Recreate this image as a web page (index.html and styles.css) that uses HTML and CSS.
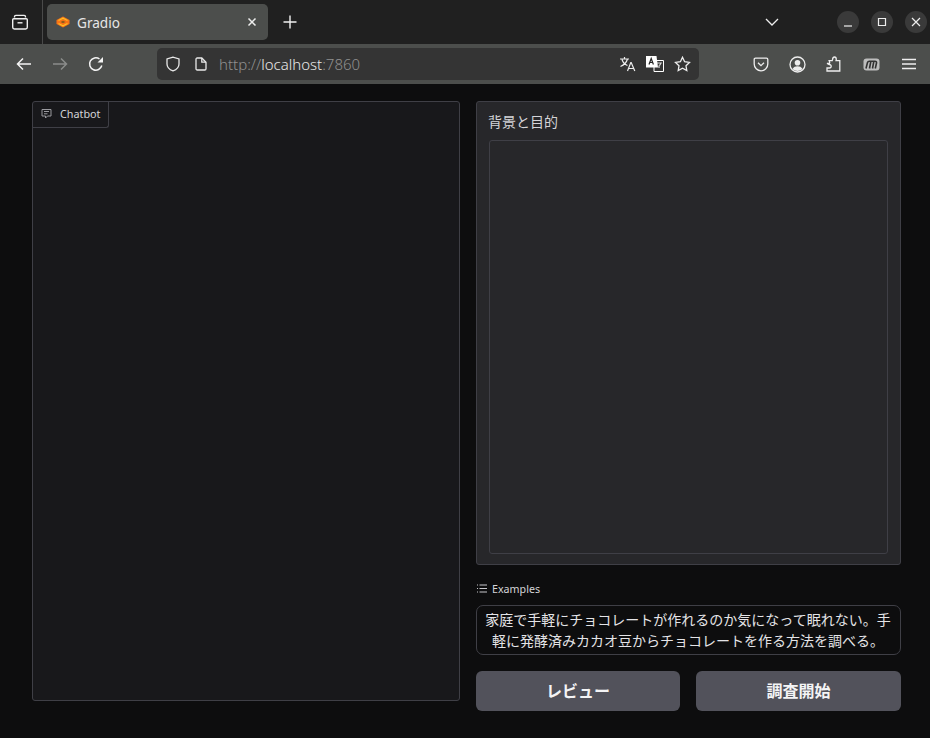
FILE: index.html
```html
<!DOCTYPE html>
<html lang="ja">
<head>
    <meta charset="UTF-8">
    <meta name="viewport" content="width=device-width, initial-scale=1.0">
    <title>Gradio</title>
    <link rel="stylesheet" href="styles.css">
</head>
<body>

<!-- Browser tab strip -->
<div class="tabbar">
    <div class="tab-side">
        <svg width="18" height="18" viewBox="0 0 18 18" fill="none" stroke="#f0f0f0" stroke-width="1.4"><path d="M3.500 4.500V3.700c0-.8.500-1.300 1.300-1.300h8.400c.8 0 1.300.5 1.300 1.300v.8"/><path d="M2.700 5.700h12.600c.6 0 1 .4 1 1v7.600c0 .9-.8 1.700-1.700 1.700H3.400c-.9 0-1.700-.8-1.700-1.700V6.700c0-.6.400-1 1-1z"/><path d="M6.500 9.800h5"/></svg>
    </div>
    <div class="tab">
        <svg class="tab-logo" width="14" height="12" viewBox="0 0 14 12" fill="none"><path d="M7 .5 13.500 4v4L7 11.500.5 8V4z" fill="#f97316"/><path d="M2.500 4.500 7 2.200l4.500 2.300M2.500 7.500 7 9.800l4.500-2.300" stroke="#fbbf24" stroke-width="1.200"/><path d="M4.500 6 7 4.800 9.500 6 7 7.200z" fill="#8a5a1c"/></svg>
        <span class="tab-title">Gradio</span>
        <svg width="10" height="10" viewBox="0 0 10 10" stroke="#eee" stroke-width="1.5"><path d="m1.500 1.500 7 7M8.500 1.500l-7 7"/></svg>
    </div>
    <svg class="new-tab" width="14" height="14" viewBox="0 0 14 14" stroke="#f0f0f0" stroke-width="1.4"><path d="M7 .5v13M.5 7h13"/></svg>
    <svg class="tab-list" width="14" height="8" viewBox="0 0 14 8" fill="none" stroke="#eee" stroke-width="1.3"><path d="m1 1 6 6 6-6"/></svg>
    <div class="win-buttons">
        <div class="win-btn"><svg width="10" height="10" viewBox="0 0 10 10" stroke="#eee" stroke-width="1.2"><path d="M1 9h8"/></svg></div>
        <div class="win-btn"><svg width="10" height="10" viewBox="0 0 10 10" fill="none" stroke="#eee" stroke-width="1.2"><path d="M1.500 1.500h7v7h-7z"/></svg></div>
        <div class="win-btn"><svg width="10" height="10" viewBox="0 0 10 10" stroke="#eee" stroke-width="1.2"><path d="m1 1 8 8M9 1 1 9"/></svg></div>
    </div>
</div>

<!-- Navigation toolbar -->
<div class="navbar">
    <div class="nav-left">
        <svg width="16" height="14" viewBox="0 0 16 14" fill="none" stroke="#f4f4f4" stroke-width="1.5"><path d="M15 7H1.500M7 1.500 1.500 7 7 12.500"/></svg>
        <svg width="16" height="14" viewBox="0 0 16 14" fill="none" stroke="#8a8c8a" stroke-width="1.5"><path d="M1 7h13.500M9 1.500 14.500 7 9 12.500"/></svg>
        <svg width="16" height="16" viewBox="0 0 16 16" fill="none" stroke="#f4f4f4" stroke-width="1.5"><path d="M13.800 9.500A6.200 6.200 0 1 1 11.500 3"/><path d="M15 1v5.500H9.500z" fill="#f4f4f4" stroke="none"/></svg>
    </div>
    <div class="urlbar">
        <svg width="16" height="16" viewBox="0 0 16 16" fill="none" stroke="#e8e8e8" stroke-width="1.3"><path d="M8 1.200 2 3v5c0 3.500 3 5.800 6 6.900 3-1.100 6-3.400 6-6.900V3z"/></svg>
        <svg class="url-page" width="12" height="14" viewBox="0 0 12 14" fill="none" stroke="#e8e8e8" stroke-width="1.300"><path d="M1 2.200C1 1.500 1.500 1 2.200 1h4.600L11 5.200v6.600c0 .7-.5 1.200-1.200 1.200H2.200C1.500 13 1 12.500 1 11.800z"/><path d="M6.800 1v4.200H11"/></svg>
        <span class="url-text"><span class="url-dim">http://</span>localhost<span class="url-dim">:7860</span></span>
        <div class="url-icons">
            <svg width="17" height="16" viewBox="0 0 17 16" fill="none" stroke="#eee" stroke-width="1.200"><path d="M1 3h9M5.500 1v2M8.500 3C7.500 6.500 5 9 1.500 10.500M3 3.500c1 3 3 5 5.500 6M8.500 15l3.300-8.500h.4L15.800 15M9.800 12.500h4.500"/></svg>
            <svg width="18" height="16" viewBox="0 0 18 16"><path d="M8 4.500h9.500v11H8z" fill="#343434" stroke="#fff"/><path d="M0 0h10.500l1.500 11.500H0z" fill="#fff"/><path d="m3 8.500 2.200-6 2.200 6M3.800 6.500h2.800" fill="none" stroke="#222" stroke-width="1.200"/><path d="M11 7h4l-1.500 2.500M13 9.500V12" fill="none" stroke="#ddd" stroke-width="1.200"/></svg>
            <svg width="17" height="16" viewBox="0 0 17 16" fill="none" stroke="#eee" stroke-width="1.300"><path d="m8.500 1.300 2.100 4.400 4.900.7-3.500 3.400.8 4.800-4.300-2.300-4.300 2.300.8-4.800L1.500 6.400l4.900-.7z"/></svg>
        </div>
    </div>
    <div class="nav-right">
        <svg width="16" height="15" viewBox="0 0 16 15" fill="none" stroke="#eee" stroke-width="1.300"><path d="M2.500 1.200h11c.8 0 1.300.5 1.300 1.300V7a6.800 6.800 0 0 1-13.600 0V2.500c0-.8.500-1.300 1.300-1.300z"/><path d="m5 5.700 3 3 3-3"/></svg>
        <svg width="17" height="17" viewBox="0 0 17 17" fill="none" stroke="#eee" stroke-width="1.300"><circle cx="8.500" cy="8.500" r="7.500"/><circle cx="8.500" cy="6.800" r="2.800" fill="#eee" stroke="none"/><path d="M3.500 13c1-2 3-2.700 5-2.700s4 .7 5 2.700c-1.300 1.300-3.200 2-5 2s-3.700-.7-5-2z" fill="#eee" stroke="none"/></svg>
        <svg width="15" height="16" viewBox="0 0 15 16" fill="none" stroke="#eee" stroke-width="1.300"><path d="M1 7.500h2.500c.4-1 .1-2-.3-2.800h3l.3-1C6.700 2 7.500 1 8.500 1s1.800 1 1.800 2.300l-.3 1.400h3.800V15H1v-3h2.300c1.200 0 1.900-.8 1.900-1.800S4.400 8.500 3.300 8.500z"/></svg>
        <svg class="nav-wide" width="17" height="13" viewBox="0 0 17 13"><rect x="0.500" y="0.500" width="16" height="12" rx="3" fill="#bdbdbd"/><path d="M3 10.500 4.500 4.500c.3-1 1-1.300 1.700-1.300h5.800c1.200 0 1.700.8 1.500 1.800L12.300 10.500M6.500 10.500 7.800 3.500M9.500 10.500 10.800 3.500" fill="none" stroke="#333" stroke-width="1.600"/></svg>
        <svg class="nav-wide" width="14" height="12" viewBox="0 0 14 12" stroke="#eee" stroke-width="1.300"><path d="M0 1.500h14M0 6h14M0 10.500h14"/></svg>
    </div>
</div>

<!-- Gradio app -->
<div class="app">
    <div class="chatbot">
        <div class="chatbot-label">
            <svg width="11" height="11" viewBox="0 0 11 11" fill="none" stroke="#9a9a9f" stroke-width="1"><path d="M1 1.500h9v6.500H6.500L4.500 10V8H1z"/><path d="M3 3.500h5M3 5.800h3.500"/></svg>
            <span>Chatbot</span>
        </div>
    </div>
    <div class="side">
        <div class="form-panel">
            <label class="form-label" for="purpose">背景と目的</label>
            <textarea class="form-input" id="purpose"></textarea>
        </div>
        <div class="examples-label">
            <svg width="10" height="9" viewBox="0 0 10 9" stroke="#c8c8cc" stroke-width="1"><path d="M0 1h1M2.500 1H10M0 4.500h1M2.500 4.500H10M0 8h1M2.500 8H10"/></svg>
            <span>Examples</span>
        </div>
        <div class="example">家庭で手軽にチョコレートが作れるのか気になって眠れない。手軽に発酵済みカカオ豆からチョコレートを作る方法を調べる。</div>
        <div class="buttons">
            <button class="btn btn-review">レビュー</button>
            <button class="btn">調査開始</button>
        </div>
    </div>
</div>

</body>
</html>
```
FILE: styles.css
```css
* {
    box-sizing: border-box;
}
html, body {
    height: 100%;
}
body {
    margin: 0;
    background: #0d0d0e;
    font-family: "Noto Sans", "Noto Sans CJK JP", sans-serif;
    overflow: hidden;
}
svg {
    display: block;
    flex: none;
}

/* tab strip */
.tabbar {
    display: flex;
    align-items: center;
    height: 44px;
    background: #202020;
}
.tab-side {
    display: flex;
    align-items: center;
    padding-left: 11px;
    width: 43px;
    height: 44px;
    border-right: 1px solid #4a4a4a;
}
.tab {
    display: flex;
    align-items: center;
    width: 221px;
    height: 36px;
    margin-left: 4px;
    padding: 0 11px 0 9px;
    background: #4c4e4c;
    border-radius: 5px;
}
.tab-title {
    flex: 1;
    margin-left: 7px;
    color: #e6e6e6;
    font-size: 13.6px;
}
.new-tab {
    margin-left: 15px;
}
.tab-list {
    margin-left: auto;
    margin-right: 58px;
}
.win-buttons {
    display: flex;
    gap: 12px;
    margin-right: 3px;
}
.win-btn {
    display: flex;
    align-items: center;
    justify-content: center;
    width: 22px;
    height: 22px;
    border-radius: 50%;
    background: #3a3a3a;
}

/* nav toolbar */
.navbar {
    display: flex;
    align-items: center;
    height: 40px;
    background: #4c4e4c;
}
.nav-left {
    display: flex;
    align-items: center;
    gap: 20px;
    width: 157px;
    padding-left: 16px;
}
.urlbar {
    display: flex;
    align-items: center;
    width: 542px;
    height: 32px;
    padding: 0 8px;
    background: #343434;
    border-radius: 5px;
}
.url-page {
    margin-left: 14px;
}
.url-text {
    margin-left: 12px;
    color: #e8e8e8;
    font-size: 15px;
    font-weight: 300;
}
.url-dim {
    color: #909090;
}
.url-icons {
    display: flex;
    align-items: center;
    gap: 10px;
    margin-left: auto;
}
.nav-right {
    display: flex;
    align-items: center;
    gap: 20px;
    flex: 1;
    padding-left: 54px;
}
.nav-wide {
    margin-left: 2px;
}

/* gradio app */
.app {
    display: flex;
    gap: 16px;
    padding: 17px 29px 0 32px;
}
.chatbot {
    width: 428px;
    height: 600px;
    background: #18181b;
    border: 1px solid #3f3f46;
    border-radius: 3px;
}
.chatbot-label {
    display: inline-flex;
    align-items: center;
    gap: 8px;
    height: 26px;
    padding: 0 7px 2px 8px;
    color: #d4d4d8;
    font-size: 10.8px;
    border-right: 1px solid #3f3f46;
    border-bottom: 1px solid #3f3f46;
    border-radius: 0 0 3px 0;
}
.side {
    display: flex;
    flex-direction: column;
    flex: 1;
}
.form-panel {
    display: flex;
    flex-direction: column;
    height: 464px;
    padding: 11px 12px 10px;
    background: #27272a;
    border: 1px solid #3f3f46;
    border-radius: 3px;
}
.form-label {
    margin: 0 0 9px -1px;
    color: #d4d4d8;
    font-size: 14px;
    line-height: 18px;
}
.form-input {
    flex: 1;
    background: #27272a;
    border: 1px solid #3f3f46;
    border-radius: 3px;
    resize: none;
}
.examples-label {
    display: flex;
    align-items: center;
    gap: 5px;
    height: 17px;
    margin-top: 15px;
    padding-left: 1px;
    color: #d4d4d8;
    font-size: 10.7px;
}
.example {
    display: flex;
    align-items: center;
    height: 50px;
    margin-top: 8px;
    padding: 0 8px 0 7px;
    color: #e4e4e7;
    font-size: 14px;
    line-height: 21px;
    text-align: center;
    border: 1px solid #3f3f46;
    border-radius: 7px;
}
.buttons {
    display: flex;
    gap: 16px;
    margin-top: 16px;
}
.btn {
    flex: 1;
    height: 40px;
    padding-bottom: 4px;
    color: #f4f4f5;
    background: #52525b;
    border: 0;
    border-radius: 6px;
    font-family: inherit;
    font-size: 16px;
    font-weight: 700;
}
.btn-review {
    flex: none;
    width: 204px;
}
```
